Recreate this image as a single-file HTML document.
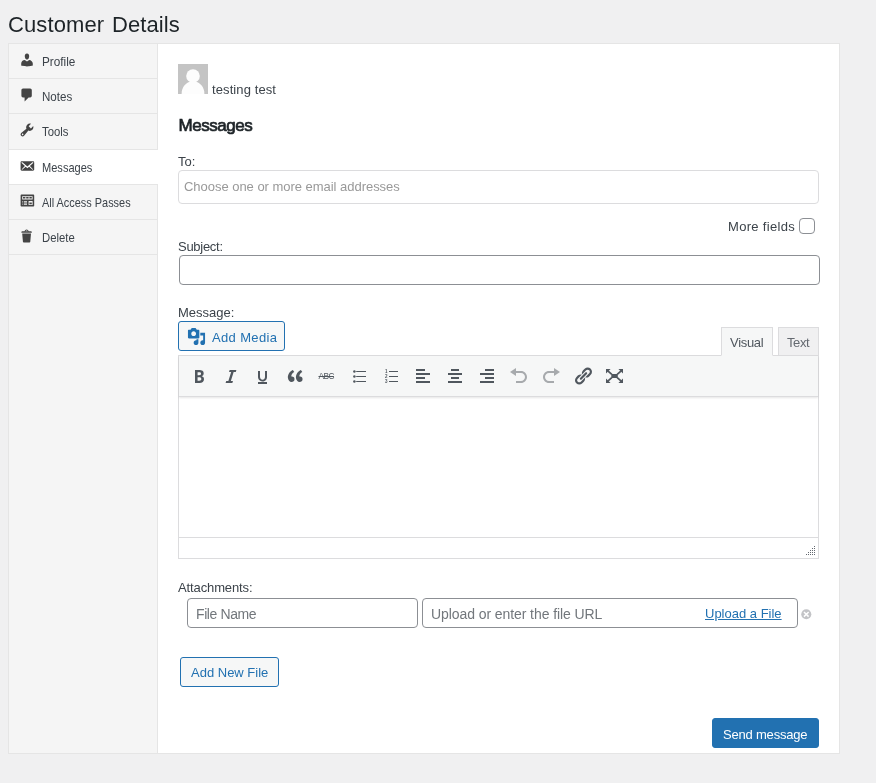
<!DOCTYPE html>
<html lang="en">
<head>
<meta charset="utf-8">
<title>Customer Details</title>
<style>
*{box-sizing:border-box;margin:0;padding:0}
html,body{width:876px;height:783px;overflow:hidden}
h1,#wrap{will-change:transform}
body{background:#f0f0f1;font-family:"Liberation Sans",Arial,sans-serif;font-size:13px;color:#3c434a;position:relative}
.abs{position:absolute;white-space:nowrap}
h1{position:absolute;left:8px;top:10px;font-size:22px;font-weight:400;color:#1d2327;line-height:30px;letter-spacing:.1px;word-spacing:1.6px;white-space:nowrap}
#wrap{position:absolute;left:8px;top:43px;width:832px;height:711px;background:#fff;border:1px solid #e5e5e5}
#tabs{position:absolute;left:0;top:0;width:149px;height:709px;background:#f5f5f5;border-right:1px solid #e5e5e5;list-style:none}
#tabs li{position:absolute;left:0;width:149px;height:35px;border-bottom:1px solid #e5e5e5}
#tabs li.active{background:#fff}
#tabs li.active::after{content:"";position:absolute;right:-1px;top:0;width:1px;height:34px;background:#fff}
#tabs li svg{position:absolute;left:10px;top:8px;width:16px;height:16px;fill:#444}
#tabs li span{position:absolute;left:33px;top:8px;line-height:20px;font-size:13px;color:#3c434a;transform-origin:0 50%;white-space:nowrap}
label,.lbl{position:absolute;white-space:nowrap;line-height:20px;color:#3c434a}
.inp{position:absolute;background:#fff;border:1px solid #8c8f94;border-radius:4px}
.ph{position:absolute;white-space:nowrap;color:#72777c;font-size:14px;line-height:20px}
.btn{position:absolute;font-family:inherit;padding:0;border:1px solid #2271b1;border-radius:3px;background:#f6f7f7;color:#2271b1;font-size:13px;line-height:28px;white-space:nowrap}
</style>
</head>
<body>
<h1>Customer Details</h1>
<div id="wrap">
<ul id="tabs">
<li style="top:0"><svg viewBox="0 0 20 20"><path d="M10 9.25c-2.270 0-2.730-3.440-2.730-3.440C7 4.020 7.820 2 9.970 2c2.160 0 2.980 2.020 2.710 3.810 0 0-.41 3.440-2.680 3.440zm0 2.570L12.720 10c2.390 0 4.520 2.330 4.520 4.530v2.490s-3.650 1.130-7.240 1.130c-3.650 0-7.240-1.130-7.240-1.130v-2.490c0-2.250 1.940-4.480 4.470-4.480z"/></svg><span style="transform:scaleX(0.905)">Profile</span></li>
<li style="top:35px"><svg viewBox="0 0 20 20"><path d="M5 2h9c1.100 0 2 .9 2 2v7c0 1.100-.9 2-2 2h-2l-5 5v-5H5c-1.100 0-2-.9-2-2V4c0-1.100.9-2 2-2z"/></svg><span style="transform:scaleX(0.89)">Notes</span></li>
<li style="top:70px;height:36px"><svg viewBox="0 0 20 20"><path d="M16.680 9.770c-1.340 1.340-3.300 1.670-4.950.99l-5.410 6.520c-.99.99-2.590.99-3.580 0s-.99-2.590 0-3.570l6.520-5.420c-.68-1.650-.35-3.610.99-4.950 1.280-1.280 3.120-1.620 4.720-1.060l-2.890 2.890 2.820 2.820 2.860-2.870c.53 1.580.18 3.390-1.080 4.650zM3.810 16.210c.4.390 1.040.390 1.430 0 .4-.4.4-1.040 0-1.430-.39-.4-1.030-.4-1.430 0-.39.390-.39 1.030 0 1.430z"/></svg><span style="transform:scaleX(0.87)">Tools</span></li>
<li class="active" style="top:106px"><svg viewBox="0 0 20 20"><path d="M19 14.500v-9c0-.83-.67-1.500-1.500-1.500H3.490c-.83 0-1.500.67-1.500 1.500v9c0 .83.67 1.500 1.500 1.500H17.500c.83 0 1.500-.67 1.500-1.500zm-1.310-9.110c.33.330.15.670-.03.840L13.600 9.950l3.900 4.060c.12.140.2.360.06.510-.13.160-.43.150-.56.050l-4.370-3.730-2.140 1.950-2.130-1.950-4.370 3.730c-.13.100-.43.110-.56-.05-.14-.15-.06-.37.060-.51l3.900-4.060-4.060-3.720c-.18-.17-.36-.51-.03-.84s.67-.17.950.07l6.240 5.040 6.250-5.040c.28-.24.620-.4.950-.07z"/></svg><span style="transform:scaleX(0.85)">Messages</span></li>
<li style="top:141px"><svg viewBox="0 0 20 20"><path fill-rule="evenodd" d="M19 16V3c0-.55-.45-1-1-1H3c-.55 0-1 .45-1 1v13c0 .55.450 1 1 1h15c.55 0 1-.45 1-1zM4 4h13v4H4V4zm1 1v2h3V5H5zm4 0v2h3V5H9zm4 0v2h3V5h-3zm-8.500 5c.28 0 .5.220.5.500s-.22.500-.5.500-.5-.22-.5-.5.220-.5.500-.5zM6 10h4v1H6v-1zm6 0h5v5h-5v-5zm-7.500 2c.28 0 .5.220.5.500s-.22.500-.5.500-.5-.22-.5-.5.220-.5.500-.5zM6 12h4v1H6v-1zm7 0v2h3v-2h-3zm-8.500 2c.28 0 .5.220.5.500s-.22.500-.5.500-.5-.22-.5-.5.220-.5.500-.5zM6 14h4v1H6v-1z"/></svg><span style="transform:scaleX(0.84)">All Access Passes</span></li>
<li style="top:176px"><svg viewBox="0 0 20 20"><path d="M12 4h3c.6 0 1 .4 1 1v1H3V5c0-.6.5-1 1-1h3c.2-1.100 1.300-2 2.500-2s2.300.9 2.500 2zM8 4h3c-.2-.6-.9-1-1.500-1S8.200 3.400 8 4zM4 7h11l-.9 10.100c0 .5-.5.9-1 .9H5.900c-.5 0-.9-.4-1-.9L4 7z"/></svg><span style="transform:scaleX(0.87)">Delete</span></li>
</ul>
<div id="main">
<svg class="abs" style="left:169px;top:20px" width="30" height="30" viewBox="0 0 30 30"><rect width="30" height="30" fill="#c4c4c4"/><circle cx="15" cy="12" r="6.800" fill="#fdfdfd"/><path d="M3.600 30C3.600 23.500 7.500 19 12 17.800L18 17.800C22.500 19 26.400 23.500 26.400 30z" fill="#fdfdfd"/></svg>
<span class="lbl" id="t-name" style="left:203px;top:36px;letter-spacing:.1px">testing test</span>
<h3 class="abs" id="t-h3" style="left:169.500px;top:70px;font-size:17px;font-weight:400;-webkit-text-stroke:.7px #1d2327;color:#1d2327;line-height:24px;letter-spacing:-.45px">Messages</h3>
<label id="t-to" style="left:169px;top:108px">To:</label>
<div class="inp" style="left:169px;top:126px;width:641px;height:34px;border-color:#dcdcde"><span class="ph" id="t-ph1" style="left:5px;top:6px;font-size:13px;color:#999;letter-spacing:-.03px">Choose one or more email addresses</span></div>
<label id="t-more" style="left:719px;top:173px;letter-spacing:.32px">More fields</label>
<span class="inp" style="left:790px;top:174px;width:16px;height:16px"></span>
<label id="t-subj" style="left:169px;top:193px;letter-spacing:-.28px">Subject:</label>
<div class="inp" style="left:170px;top:211px;width:641px;height:30px"></div>
<label id="t-msg" style="left:169px;top:259px;letter-spacing:0">Message:</label>
<button class="btn" style="left:169px;top:277px;width:107px;height:30px"><svg class="abs" style="left:8px;top:5px;fill:#2271b1" width="19" height="19" viewBox="0 0 20 20"><path d="M13 11V4c0-.55-.45-1-1-1h-1.670L9 1H5L3.670 3H2c-.55 0-1 .45-1 1v7c0 .55.450 1 1 1h10c.55 0 1-.45 1-1zM7 4.500c1.380 0 2.500 1.120 2.500 2.500S8.380 9.500 7 9.500 4.500 8.380 4.500 7 5.620 4.500 7 4.500zM14 6h5v10.500c0 1.380-1.120 2.500-2.500 2.500S14 17.880 14 16.500s1.120-2.500 2.500-2.500c.17 0 .34.020.5.050V9h-3V6zm-4 8.050V13h2v3.500c0 1.380-1.120 2.500-2.500 2.500S7 17.880 7 16.500 8.120 14 9.500 14c.17 0 .34.020.5.050z"/></svg><span class="abs" id="t-addm" style="left:33px;top:2px;letter-spacing:.35px">Add Media</span></button>
<div class="abs tab" style="left:769px;top:283px;width:41px;height:29px;background:#f0f0f1;border:1px solid #dcdcde;color:#646970"><span class="abs" id="t-text" style="left:8px;top:5px;line-height:20px;letter-spacing:-.4px">Text</span></div>
<div id="ed" class="abs" style="left:169px;top:311px;width:641px;height:204px;border:1px solid #dcdcde;background:#fff">
<div id="tb" class="abs" style="left:0;top:0;width:639px;height:41px;background:#f6f7f7;border-bottom:1px solid #dcdcde;box-shadow:0 1px 2px rgba(0,0,0,.1)">
<svg class="abs" style="left:9.500px;top:10px;fill:#50575e" width="20" height="20" viewBox="0 0 20 20"><path d="M6 4v13h4.540c1.370 0 2.460-.33 3.260-1 .8-.66 1.200-1.580 1.200-2.770 0-.84-.17-1.510-.51-2.010s-.9-.85-1.670-1.030v-.09c.57-.1 1.020-.4 1.360-.9s.51-1.130.51-1.910c0-1.140-.39-1.980-1.170-2.500C12.750 4.260 11.500 4 9.780 4H6zm2.570 5.150V6.260h1.360c.73 0 1.270.11 1.610.32.34.22.51.58.51 1.070 0 .54-.16.92-.47 1.150s-.82.350-1.510.350h-1.500zm0 2.190h1.600c1.440 0 2.160.53 2.160 1.610 0 .6-.17 1.050-.51 1.340s-.86.430-1.570.430H8.570v-3.380z"/></svg>
<svg class="abs" style="left:41.500px;top:10px;fill:#50575e" width="20" height="20" viewBox="0 0 20 20"><path d="M14.780 6h-2.130l-2.800 9h2.120l-.62 2H4.600l.62-2h2.140l2.800-9H8.030l.62-2h6.750z"/></svg>
<svg class="abs" style="left:73.500px;top:10px;fill:#50575e" width="20" height="20" viewBox="0 0 20 20"><path d="M14 5h-2v5.710c0 1.990-1.120 2.980-2.450 2.980-1.320 0-2.550-1-2.550-2.960V5H5v5.870c0 1.910 1 4.540 4.480 4.540 3.490 0 4.520-2.580 4.520-4.500V5zm0 13v-2H5v2h9z"/></svg>
<svg class="abs" style="left:105.500px;top:10px;fill:#50575e" width="20" height="20" viewBox="0 0 20 20"><path d="M9.490 13.220c0-.74-.2-1.380-.61-1.900-.62-.78-1.830-.88-2.530-.72-.29-1.650 1.110-3.750 2.920-4.650L7.880 4c-2.730 1.300-5.420 4.280-4.960 8.050C3.210 14.430 4.590 16 6.540 16c.85 0 1.560-.25 2.120-.75s.83-1.180.83-2.030zm8.050 0c0-.74-.2-1.380-.61-1.900-.63-.78-1.830-.88-2.530-.72-.29-1.650 1.110-3.750 2.920-4.650L15.930 4c-2.730 1.300-5.410 4.280-4.950 8.050.29 2.380 1.660 3.950 3.610 3.950.85 0 1.560-.25 2.120-.75s.83-1.180.83-2.030z"/></svg>
<span class="abs" style="left:139.500px;top:14px;font-size:8.400px;font-weight:400;line-height:12px;color:#50575e;text-decoration:line-through;text-decoration-thickness:.7px;letter-spacing:-.6px">ABC</span>
<svg class="abs" style="left:169.500px;top:10px;fill:#50575e" width="20" height="20" viewBox="0 0 20 20"><circle cx="5.400" cy="5.500" r="1.250"/><circle cx="5.400" cy="10.500" r="1.250"/><circle cx="5.400" cy="15.500" r="1.250"/><path d="M7.200 5H17v1H7.200zM7.200 10H17v1H7.200zM7.200 15H17v1H7.200z"/></svg>
<svg class="abs" style="left:201.500px;top:10px;fill:#50575e" width="20" height="20" viewBox="0 0 20 20"><path d="M8 5h9v1H8zM8 10h9v1H8zM8 15h9v1H8z"/><text x="4" y="7" font-size="4.500" font-weight="700" font-family="Liberation Sans,sans-serif">1</text><text x="4" y="12" font-size="4.500" font-weight="700" font-family="Liberation Sans,sans-serif">2</text><text x="4" y="17" font-size="4.500" font-weight="700" font-family="Liberation Sans,sans-serif">3</text></svg>
<svg class="abs" style="left:233.5px;top:10px;fill:#50575e" width="20" height="20" viewBox="0 0 20 20"><path d="M12 5V3H3v2h9zm5 4V7H3v2h14zm-5 4v-2H3v2h9zm5 4v-2H3v2h14z"/></svg>
<svg class="abs" style="left:265.5px;top:10px;fill:#50575e" width="20" height="20" viewBox="0 0 20 20"><path d="M14 5V3H6v2h8zm3 4V7H3v2h14zm-3 4v-2H6v2h8zm3 4v-2H3v2h14z"/></svg>
<svg class="abs" style="left:297.5px;top:10px;fill:#50575e" width="20" height="20" viewBox="0 0 20 20"><path d="M17 5V3H8v2h9zm0 4V7H3v2h14zm0 4v-2H8v2h9zm0 4v-2H3v2h14z"/></svg>
<svg class="abs" style="left:330px;top:10px;fill:#a7aaad" width="20" height="20" viewBox="0 0 20 20"><path d="M12 5H7V2L1 6l6 4V7h5c2.200 0 4 1.800 4 4s-1.800 4-4 4H7v2h5c3.300 0 6-2.700 6-6s-2.700-6-6-6z"/></svg>
<svg class="abs" style="left:362px;top:10px;fill:#a7aaad" width="20" height="20" viewBox="0 0 20 20"><path d="M8 5h5V2l6 4-6 4V7H8c-2.200 0-4 1.800-4 4s1.800 4 4 4h5v2H8c-3.300 0-6-2.700-6-6s2.700-6 6-6z"/></svg>
<svg class="abs" style="left:394px;top:10px;fill:#50575e" width="20" height="20" viewBox="0 0 20 20"><path d="M17.740 2.760c1.680 1.690 1.680 4.410 0 6.100l-1.530 1.520c-1.120 1.120-2.700 1.470-4.140 1.090l2.620-2.610.76-.77.76-.76c.84-.84.84-2.200 0-3.040-.84-.85-2.200-.85-3.040 0l-.77.76-3.380 3.380c-.37-1.440-.02-3.020 1.100-4.140l1.520-1.530c1.690-1.680 4.420-1.680 6.100 0zM8.590 13.430l5.340-5.340c.42-.42.42-1.100 0-1.520-.44-.43-1.130-.39-1.530 0l-5.330 5.340c-.42.42-.42 1.100 0 1.520.44.430 1.130.390 1.520 0zm-.76 2.290l4.140-4.150c.38 1.440.03 3.020-1.090 4.140l-1.520 1.530c-1.690 1.680-4.410 1.680-6.100 0-1.680-1.680-1.680-4.420 0-6.100l1.530-1.520c1.120-1.120 2.700-1.470 4.140-1.100l-4.140 4.150c-.85.84-.85 2.200 0 3.050.84.84 2.200.84 3.040 0z"/></svg>
<svg class="abs" style="left:425px;top:10px;fill:#50575e;stroke:#50575e" width="20" height="20" viewBox="0 0 20 20"><path stroke="none" d="M7.300 8h6.500v4H7.300zM2 3h4.600L2 7.600zM19 3v4.600L14.400 3zM2 17v-4.600L6.600 17zM19 17h-4.600L19 12.400z"/><path fill="none" stroke-width="1.800" d="M3.800 4.800L7.800 8.400M17.200 4.800L13.200 8.400M3.800 15.200L7.800 11.600M17.200 15.200L13.200 11.600"/></svg>
</div>
<div class="abs" style="left:0;top:181px;width:639px;height:21px;border-top:1px solid #dcdcde;background:#fff"></div>
<svg class="abs" style="left:627px;top:190px;fill:#646970" width="9" height="9" viewBox="0 0 9 9" shape-rendering="crispEdges"><rect x="8" y="0" width="1" height="1"/><rect x="6" y="2" width="1" height="1"/><rect x="8" y="2" width="1" height="1"/><rect x="4" y="4" width="1" height="1"/><rect x="6" y="4" width="1" height="1"/><rect x="8" y="4" width="1" height="1"/><rect x="2" y="6" width="1" height="1"/><rect x="4" y="6" width="1" height="1"/><rect x="6" y="6" width="1" height="1"/><rect x="8" y="6" width="1" height="1"/><rect x="0" y="8" width="1" height="1"/><rect x="2" y="8" width="1" height="1"/><rect x="4" y="8" width="1" height="1"/><rect x="6" y="8" width="1" height="1"/><rect x="8" y="8" width="1" height="1"/></svg>
</div>
<div class="abs tab" style="left:712px;top:283px;width:52px;height:29px;background:#f6f7f7;border:1px solid #dcdcde;border-bottom-color:#f6f7f7;color:#50575e"><span class="abs" id="t-visual" style="left:8px;top:5px;line-height:20px;letter-spacing:-.3px">Visual</span></div>
<label id="t-att" style="left:169px;top:534px;letter-spacing:-.12px">Attachments:</label>
<div class="inp" style="left:178px;top:554px;width:231px;height:30px"><span class="ph" id="t-fn" style="left:8px;top:5px;letter-spacing:-.4px">File Name</span></div>
<div class="inp" style="left:413px;top:554px;width:376px;height:30px"><span class="ph" id="t-url" style="left:8px;top:5px;letter-spacing:-.08px">Upload or enter the file URL</span><a class="abs" id="t-upl" style="left:282px;top:5px;line-height:20px;font-size:13px;color:#2271b1;text-decoration:underline">Upload a File</a></div>
<svg class="abs" style="left:790.700px;top:563.600px" width="12.600" height="12.600" viewBox="0 0 20 20"><circle cx="10" cy="10" r="8" fill="#c3c4c7"/><path d="M6.300 6.300l7.400 7.400M13.700 6.300l-7.400 7.400" stroke="#fff" stroke-width="2.300" fill="none"/></svg>
<button class="btn" style="left:171px;top:613px;width:99px;height:30px"><span class="abs" id="t-anf" style="left:10px;top:1px">Add New File</span></button>
<button class="btn" style="left:703px;top:674px;width:107px;height:30px;background:#2271b1;color:#fff"><span class="abs" id="t-send" style="left:10px;top:2px;letter-spacing:-.2px">Send message</span></button>
</div>
</div>
</body>
</html>
